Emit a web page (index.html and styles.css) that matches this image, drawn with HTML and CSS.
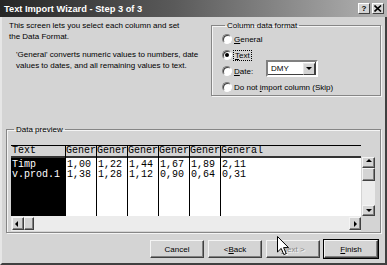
FILE: index.html
```html
<!DOCTYPE html>
<html lang="en">

<head>
    <meta charset="UTF-8">
    <title>Text Import Wizard - Step 3 of 3</title>
    <link rel="stylesheet" href="styles.css">
</head>

<body>
    <div class="window">
        <div class="titlebar">
            <span class="title">Text Import Wizard - Step 3 of 3</span>
            <div class="caption-btns">
                <span class="cap-btn help">?</span>
                <span class="cap-btn close">
                    <svg width="8" height="7" viewBox="0 0 8 7"><path d="M0.5 0.5L7 6.5M7 0.5L0.5 6.5" stroke="#000" stroke-width="1.6"/></svg>
                </span>
            </div>
        </div>

        <div class="top">
            <div class="intro">
                <p>This screen lets you select each column and set<br>the Data Format.</p>
                <p class="note">'General' converts numeric values to numbers, date<br>values to dates, and all remaining values to text.</p>
            </div>

            <fieldset class="group format">
                <legend>Column data format</legend>
                <div class="radio"><i class="dot"></i><span><u>G</u>eneral</span></div>
                <div class="radio checked"><i class="dot"></i><span class="focus"><u>T</u>ext</span></div>
                <div class="radio"><i class="dot"></i><span class="date-label"><u>D</u>ate:</span>
                    <div class="combo"><span>DMY</span><b class="drop"></b></div>
                </div>
                <div class="radio"><i class="dot"></i><span>Do not <u>i</u>mport column (Skip)</span></div>
            </fieldset>
        </div>

        <fieldset class="group preview">
            <legend>Data preview</legend>
            <div class="sheet">
                <div class="table">
                    <div class="col selected w-text">
                        <div class="head">Text</div>
                        <div class="cells">Timp<br>v.prod.1</div>
                    </div>
                    <div class="col w-31">
                        <div class="head">Gener</div>
                        <div class="cells">1,00<br>1,38</div>
                    </div>
                    <div class="col w-31">
                        <div class="head">Gener</div>
                        <div class="cells">1,22<br>1,28</div>
                    </div>
                    <div class="col w-31">
                        <div class="head">Gener</div>
                        <div class="cells">1,44<br>1,12</div>
                    </div>
                    <div class="col w-31">
                        <div class="head">Gener</div>
                        <div class="cells">1,67<br>0,90</div>
                    </div>
                    <div class="col w-31">
                        <div class="head">Gener</div>
                        <div class="cells">1,89<br>0,64</div>
                    </div>
                    <div class="col last">
                        <div class="head">General</div>
                        <div class="cells">2,11<br>0,31</div>
                    </div>
                </div>
                <div class="vscroll">
                    <span class="sbtn"><b class="arr up"></b></span>
                    <span class="thumb"></span>
                    <span class="track"></span>
                    <span class="sbtn"><b class="arr down"></b></span>
                </div>
                <div class="hscroll">
                    <span class="sbtn"><b class="arr left"></b></span>
                    <span class="thumb"></span>
                    <span class="track"></span>
                    <span class="sbtn"><b class="arr right"></b></span>
                </div>
            </div>
        </fieldset>

        <div class="buttons">
            <span class="btn">Cancel</span>
            <span class="btn">&lt; <u>B</u>ack</span>
            <span class="btn disabled"><u>N</u>ext &gt;</span>
            <span class="btn default"><u>F</u>inish</span>
        </div>

        <!-- mouse pointer -->
        <svg class="cursor" width="13" height="20" viewBox="0 0 13 20">
            <path d="M0.5 0.5L0.5 16L4.2 12.4L6.8 18.6L9.2 17.6L6.6 11.6L11.5 11.6Z" fill="#fff" stroke="#000" stroke-width="1"/>
        </svg>
    </div>
</body>

</html>
```

FILE: styles.css
```css
* {
    box-sizing: border-box;
}

body {
    margin: 0;
    background: #d4d4d4;
    font-family: "Liberation Sans", Arial, sans-serif;
    font-size: 8px;
    color: #000;
}

p {
    margin: 0;
}

.window {
    position: relative;
    width: 387px;
    height: 265px;
    background: #d4d4d4;
    border-left: 2px solid #e6e6e6;
    border-right: 2px solid #404040;
    border-bottom: 2px solid #404040;
}

/* 标题栏 */
.titlebar {
    display: flex;
    align-items: center;
    justify-content: space-between;
    height: 17px;
    margin-left: -2px;
    margin-right: -2px;
    padding: 0 3px 0 4px;
    background: linear-gradient(to right, #262626, #5a5a5a 45%, #b4b4b4);
}

.title {
    color: #fff;
    font-weight: bold;
    font-size: 9.3px;
}

.caption-btns {
    display: flex;
    gap: 2px;
}

.cap-btn {
    display: flex;
    align-items: center;
    justify-content: center;
    width: 12px;
    height: 11px;
    background: #d4d4d4;
    border: 1px solid;
    border-color: #fff #404040 #404040 #fff;
    font-weight: bold;
    font-size: 8px;
    line-height: 1;
}

/* 上半部分 */
.top {
    display: flex;
    height: 107px;
}

.intro {
    flex: 1;
    padding: 3px 0 0 7px;
    line-height: 11px;
    white-space: nowrap;
}

.intro .note {
    margin-top: 7px;
    padding-left: 7px;
}

.group {
    margin: 0;
    padding: 0;
    min-width: 0;
    border: 1px solid #868686;
    box-shadow: inset 1px 1px #f4f4f4, 1px 1px #f4f4f4;
}

.group legend {
    margin-left: 3px;
    padding: 0 2px;
    line-height: 11px;
}

.format {
    flex: none;
    width: 170px;
    height: 76px;
    margin: 3px 4px 0 0;
    padding: 0 0 0 10px;
}

.radio {
    display: flex;
    align-items: center;
    gap: 2px;
    height: 16px;
}

.dot {
    position: relative;
    width: 10px;
    height: 10px;
    border-radius: 50%;
    background: #fff;
    border: 1px solid;
    border-color: #808080 #fff #fff #808080;
    box-shadow: inset 1px 1px #404040;
}

.checked .dot::after {
    content: '';
    position: absolute;
    left: 2px;
    top: 2px;
    width: 4px;
    height: 4px;
    border-radius: 50%;
    background: #000;
}

.focus {
    outline: 1px dotted #000;
    padding: 0 1px;
}

.date-label {
    width: 30px;
}

.combo {
    display: flex;
    align-items: center;
    justify-content: space-between;
    width: 52px;
    height: 17px;
    margin-top: -5px;
    padding: 0 1px 0 3px;
    background: #fff;
    border: 2px solid;
    border-color: #808080 #fff #fff #808080;
    box-shadow: -1px -1px #404040 inset;
}

.drop {
    position: relative;
    width: 12px;
    height: 12px;
    background: #d4d4d4;
    border: 1px solid;
    border-color: #e6e6e6 #404040 #404040 #e6e6e6;
}

.drop::after,
.arr {
    content: '';
    position: absolute;
    width: 0;
    height: 0;
    border: 3px solid transparent;
}

.drop::after {
    left: 2px;
    top: 3px;
    border-top: 3px solid #000;
    border-bottom: 0;
}

/* 数据预览 */
.preview {
    width: 375px;
    height: 109px;
    margin: 0 0 0 4px;
    padding: 10px 0 0 4px;
}

.sheet {
    display: grid;
    grid-template-columns: 350px 14px;
    grid-template-rows: 11px 60px 15px;
}

.table {
    grid-column: 1;
    grid-row: 1 / 3;
    display: flex;
    background: #fff;
    border-top: 1px solid #000;
    font-family: "Liberation Mono", "Courier New", monospace;
    font-size: 10px;
    line-height: 10px;
}

.col {
    display: flex;
    flex-direction: column;
    border-right: 1px solid #000;
    overflow: hidden;
    white-space: nowrap;
}

.col.last {
    flex: 1;
    border-right: 0;
}

.w-text { width: 55px; }
.w-31 { width: 31px; }

.head {
    height: 10px;
    padding-left: 0;
    background: #d4d4d4;
    border-bottom: 2px solid #333;
    box-sizing: content-box;
}

.selected .head {
    padding-left: 1px;
}

.cells {
    flex: 1;
    padding: 2px 0 0 1px;
}

.selected .cells {
    background: #000;
    color: #fff;
}

.vscroll,
.hscroll {
    display: flex;
    background: #ececec;
}

.vscroll {
    grid-column: 2;
    grid-row: 2;
    flex-direction: column;
    margin: 1px 0 0 1px;
}

.hscroll {
    grid-column: 1;
    grid-row: 3;
    padding: 1px 0 0 1px;
}

.sbtn,
.thumb {
    position: relative;
    flex: none;
    background: #d4d4d4;
    border: 1px solid;
    border-color: #f4f4f4 #404040 #404040 #f4f4f4;
    box-shadow: inset -1px -1px #808080;
}

.vscroll .sbtn,
.vscroll .thumb {
    width: 13px;
    height: 11px;
}

.vscroll .thumb {
    height: 13px;
}

.hscroll .sbtn,
.hscroll .thumb {
    width: 12px;
    height: 13px;
}

.hscroll .thumb {
    width: 10px;
}

.track {
    flex: 1;
}

.arr.up {
    left: 3px;
    top: 1px;
    border-bottom: 3px solid #000;
    border-top: 0;
}

.arr.down {
    left: 3px;
    top: 3px;
    border-top: 3px solid #000;
    border-bottom: 0;
}

.arr.left {
    left: 2px;
    top: 3px;
    border-right: 3px solid #000;
    border-left: 0;
}

.arr.right {
    left: 4px;
    top: 3px;
    border-left: 3px solid #000;
    border-right: 0;
}

/* 底部按钮 */
.buttons {
    display: flex;
    justify-content: flex-end;
    gap: 3px;
    margin-top: 7px;
    padding-right: 7px;
}

.btn {
    display: flex;
    align-items: center;
    justify-content: center;
    width: 54px;
    height: 18px;
    background: #d4d4d4;
    border: 1px solid;
    border-color: #f4f4f4 #404040 #404040 #f4f4f4;
    box-shadow: inset -1px -1px #808080;
}

.btn + .btn {
    margin-left: 1px;
}

.btn.disabled {
    color: #8a8a8a;
    text-shadow: 1px 1px #f4f4f4;
}

.btn.default {
    outline: 1px solid #000;
    outline-offset: 0;
}

.cursor {
    position: absolute;
    left: 275px;
    top: 236px;
}
```
